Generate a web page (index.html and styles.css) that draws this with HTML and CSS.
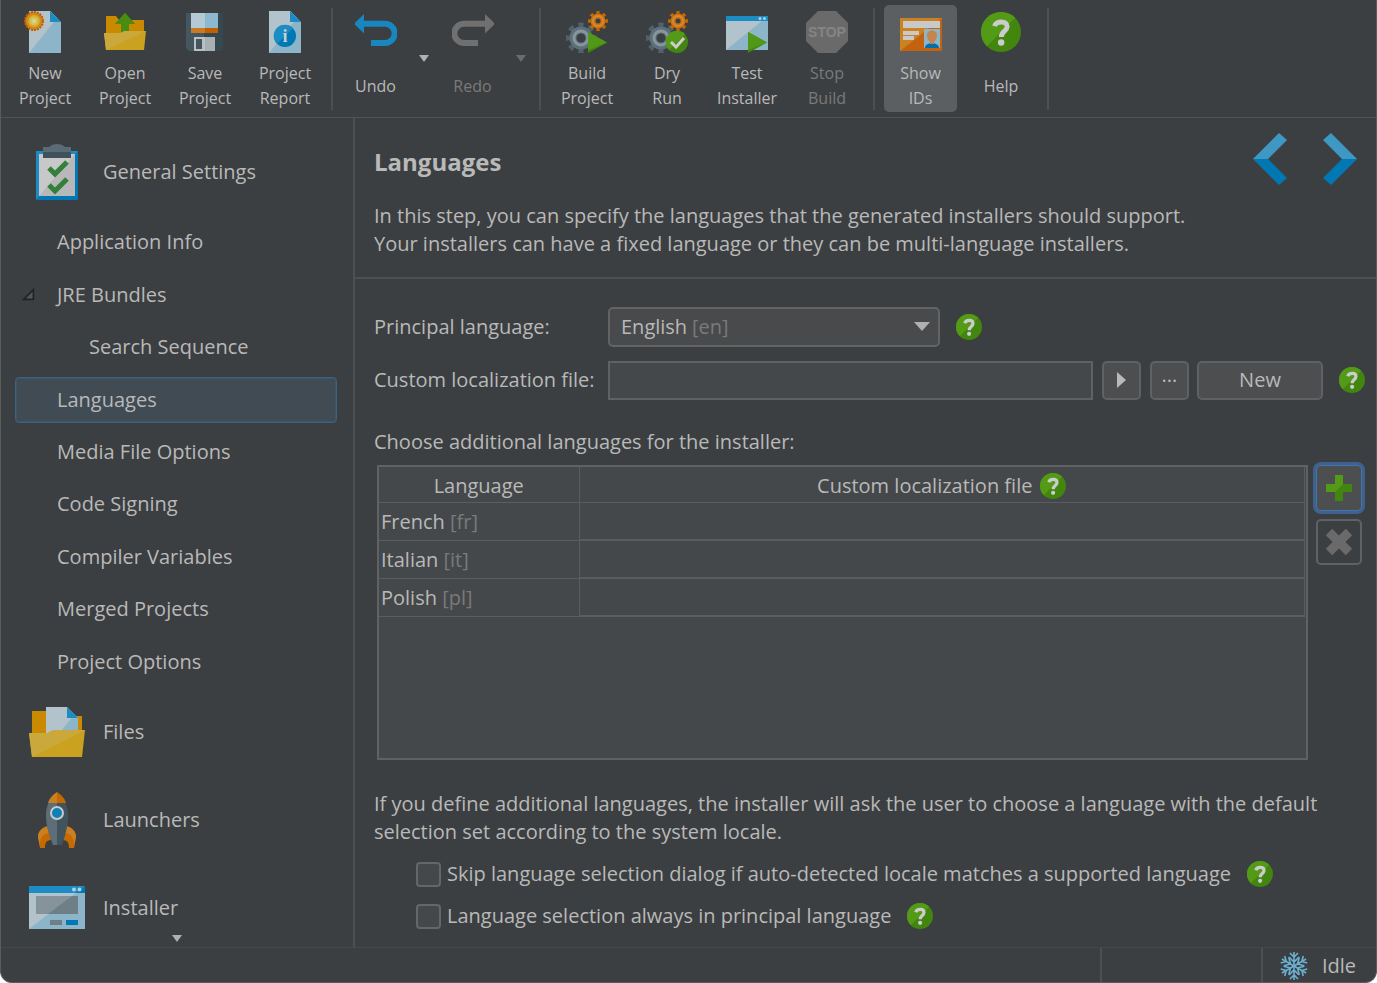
FILE: index.html
```html
<!DOCTYPE html>
<html lang="en">
<head>
  <meta charset="UTF-8">
  <meta name="viewport" content="width=device-width, initial-scale=1.0">
  <title>Languages</title>
  <link rel="stylesheet" href="styles.css">
</head>
<body>

  <!-- shared icons -->
  <svg class="defs" aria-hidden="true">
    <symbol id="i-help" viewBox="0 0 26 26">
      <circle cx="13" cy="13" r="13" fill="#42860f"/>
      <path d="M3.8 22.2A13 13 0 0 1 22.2 3.8z" fill="#539a17"/>
      <path d="M8.800 9.200C9.800 5.600 17 5.400 17 9.500C17 12.600 13.200 12.400 13.200 16.200" fill="none" stroke="#cccccc" stroke-width="3.200"/>
      <circle cx="13.100" cy="19.800" r="2.100" fill="#cccccc"/>
    </symbol>
    <symbol id="i-gears" viewBox="0 0 42 42">
      <circle cx="15" cy="27" r="13" fill="none" stroke="#4f616b" stroke-width="5" pathLength="16" stroke-dasharray="1 1" stroke-dashoffset="0.5"/>
      <circle cx="15" cy="27" r="8" fill="none" stroke="#5d6f79" stroke-width="7"/>
      <circle cx="15" cy="27" r="7" fill="none" stroke="#87959c" stroke-width="3"/>
      <circle cx="32" cy="10" r="8" fill="none" stroke="#c46700" stroke-width="4" pathLength="16" stroke-dasharray="1 1" stroke-dashoffset="0.5"/>
      <circle cx="32" cy="10" r="5" fill="none" stroke="#cc7009" stroke-width="5"/>
      <circle cx="32" cy="10" r="5" fill="none" stroke="#d28a3a" stroke-width="2"/>
    </symbol>
    <symbol id="i-play" viewBox="0 0 42 42">
      <path d="M22 21L41 31.500L22 42z" fill="#42860f"/>
      <path d="M22 21L41 31.500L22 39z" fill="#529818"/>
    </symbol>
    <symbol id="i-turn" viewBox="0 0 42 42">
      <path d="M8 12.700H30a9.600 9.600 0 0 1 0 19.300H16" fill="none" stroke="currentColor" stroke-width="6"/>
      <path d="M-1 12.700L9 3v19.500z" fill="currentColor"/>
    </symbol>
  </svg>

  <header class="toolbar">
    <div class="group">
      <button class="tool">
        <svg viewBox="0 0 42 42">
          <path d="M5 0H26L37 11V42H5z" fill="#8db5c9"/>
          <path d="M5 0H26L33 7L5 42z" fill="#b3c3cb"/>
          <path d="M26 0L37 11H26z" fill="#1c8cc4"/>
          <circle cx="10" cy="10" r="9" fill="#d08a1c" stroke="#c45a00" stroke-width="2" stroke-dasharray="2 1"/>
          <circle cx="10" cy="10" r="6" fill="#d3b02f"/>
          <circle cx="10" cy="10" r="4" fill="#d3c556"/>
          <circle cx="10" cy="10" r="2" fill="#d8d49a"/>
        </svg>
        <span>New<br>Project</span>
      </button>
      <button class="tool">
        <svg viewBox="0 0 42 42">
          <path d="M2 5H12L15 9H40V25H2z" fill="#c98a00"/>
          <path d="M21 2L31 13H25V24H17V13H11z" fill="#478d11"/>
          <path d="M0 22H16L20 20H42L40 39H2z" fill="#cba21f"/>
          <path d="M0 22H16L20 20H42L2 39z" fill="#cba83c"/>
          <path d="M21 2L31 13H25V20H20L17 21.500V13H11z" fill="#478d11"/>
        </svg>
        <span>Open<br>Project</span>
      </button>
      <button class="tool">
        <svg viewBox="0 0 42 42">
          <path d="M2 2H39V40H5L2 37z" fill="#35474f"/>
          <path d="M2 2H20V40H5L2 37z" fill="#445761"/>
          <rect x="7" y="2" width="27" height="15" fill="#8db9d0"/>
          <rect x="7" y="2" width="14" height="15" fill="#b3c9d3"/>
          <rect x="7" y="17" width="27" height="5" fill="#c45f00"/>
          <rect x="7" y="17" width="14" height="5" fill="#ca7a22"/>
          <rect x="10" y="26" width="21" height="14" fill="#a9b0b3"/>
          <rect x="10" y="26" width="11" height="14" fill="#bcc0c2"/>
          <rect x="12" y="28" width="6" height="10" fill="#44555e"/>
        </svg>
        <span>Save<br>Project</span>
      </button>
      <button class="tool">
        <svg viewBox="0 0 42 42">
          <path d="M5 0H26L37 11V42H5z" fill="#8db5c9"/>
          <path d="M5 0H26L33 7L5 42z" fill="#b3c3cb"/>
          <path d="M26 0L37 11H26z" fill="#1c8cc4"/>
          <circle cx="21" cy="25" r="11" fill="#0078b4"/>
          <path d="M13 33A11 11 0 0 1 29 17z" fill="#1c8cc4"/>
          <text class="serif" x="21" y="31" text-anchor="middle" font-size="18" font-weight="700" fill="#c8d0d4">i</text>
        </svg>
        <span>Project<br>Report</span>
      </button>
    </div>

    <div class="group">
      <button class="tool narrow undo">
        <svg><use href="#i-turn"/></svg>
        <span>Undo</span>
      </button>
      <button class="more" aria-label="Undo history"><i class="caret"></i></button>
      <button class="tool narrow redo" disabled>
        <svg><use href="#i-turn"/></svg>
        <span>Redo</span>
      </button>
      <button class="more" aria-label="Redo history" disabled><i class="caret"></i></button>
    </div>

    <div class="group">
      <button class="tool">
        <svg><use href="#i-gears"/><use href="#i-play"/></svg>
        <span>Build<br>Project</span>
      </button>
      <button class="tool">
        <svg viewBox="0 0 42 42">
          <use href="#i-gears"/>
          <circle cx="31" cy="31" r="11" fill="#42860f"/>
          <path d="M23 39A11 11 0 0 1 39 23z" fill="#539a17"/>
          <path d="M25 31L30 36L38 27" fill="none" stroke="#cccccc" stroke-width="3"/>
        </svg>
        <span>Dry<br>Run</span>
      </button>
      <button class="tool">
        <svg viewBox="0 0 42 42">
          <rect y="5" width="42" height="34" fill="#8db5c9"/>
          <path d="M0 5H42L0 39z" fill="#b3c3cb"/>
          <rect y="5" width="42" height="5" fill="#1c8cc4"/>
          <circle cx="34" cy="7.500" r="1.500" fill="#b3cfdc"/>
          <circle cx="38.500" cy="7.500" r="1.500" fill="#b3cfdc"/>
          <use href="#i-play"/>
        </svg>
        <span>Test<br>Installer</span>
      </button>
      <button class="tool" disabled>
        <svg viewBox="0 0 42 42">
          <path d="M12 0H30L42 12V30L30 42H12L0 30V12z" fill="#6a6a6a"/>
          <text class="sans" x="21" y="26" text-anchor="middle" font-size="14" font-weight="700" fill="#858585">STOP</text>
        </svg>
        <span>Stop<br>Build</span>
      </button>
    </div>

    <div class="group">
      <button class="tool narrow active" aria-pressed="true">
        <svg viewBox="0 0 42 42">
          <rect y="7" width="42" height="33" fill="#c46210"/>
          <path d="M0 7H42L0 40z" fill="#cb8220"/>
          <rect x="3" y="10" width="37" height="7" fill="#c9c9c9"/>
          <rect x="3" y="20" width="16" height="4" fill="#c9c9c9"/>
          <rect x="3" y="25" width="11" height="4" fill="#c9c9c9"/>
          <rect x="24" y="18" width="16" height="19" fill="#8db5c9"/>
          <path d="M25 37C25 33 29 33 30 32H34C35 33 39 33 39 37z" fill="#0070aa"/>
          <path d="M27 24C27 18 37 18 37 24C37 28 35 30 34 31V33H30V31C29 30 27 28 27 24z" fill="#c48450"/>
        </svg>
        <span>Show<br>IDs</span>
      </button>
      <button class="tool help-tool">
        <svg viewBox="0 0 42 42"><use href="#i-help" x="1" y="1" width="40" height="40"/></svg>
        <span>Help</span>
      </button>
    </div>
  </header>

  <main>
    <nav class="sidebar">
      <a class="category" href="#">
        <svg viewBox="0 0 56 56">
          <rect x="7" y="7" width="42" height="49" rx="1" fill="#0078b4"/>
          <path d="M7 7H49L7 56z" fill="#1c8cc4"/>
          <rect x="10" y="10" width="36" height="42" fill="#b8b8ba"/>
          <path d="M10 10H46L10 52z" fill="#c8c8c8"/>
          <path d="M14 3H20C24 -1 32 -1 36 3H42V14H14z" fill="#5a6b75"/>
          <rect x="14" y="8" width="28" height="6" fill="#3f525c"/>
          <path d="M20 24L26 30L38 18M20 41L26 47L38 35" fill="none" stroke="#32803a" stroke-width="5"/>
        </svg>
        General Settings
      </a>
      <ul>
        <li><a href="#">Application Info</a></li>
        <li>
          <a href="#">
            <svg class="expander" viewBox="0 0 12 12"><path d="M1.500 10.500H10.500V1.500z" fill="#555555" stroke="#222222" stroke-width="1.500"/></svg>
            JRE Bundles
          </a>
        </li>
        <li><a class="nested" href="#">Search Sequence</a></li>
        <li><a class="selected" href="#">Languages</a></li>
        <li><a href="#">Media File Options</a></li>
        <li><a href="#">Code Signing</a></li>
        <li><a href="#">Compiler Variables</a></li>
        <li><a href="#">Merged Projects</a></li>
        <li><a href="#">Project Options</a></li>
      </ul>
      <a class="category" href="#">
        <svg viewBox="0 0 56 56">
          <path d="M3 7H18V12H53V30H3z" fill="#c98a00"/>
          <path d="M17 3H38L49 14V32H17z" fill="#8db5c9"/>
          <path d="M17 3H38L44 12L28 32H17z" fill="#b3c3cb"/>
          <path d="M38 3L49 14H38z" fill="#1c8cc4"/>
          <path d="M0 29H19L24 26H56L53 53H3z" fill="#cba21f"/>
          <path d="M0 29H19L24 26H56L3 53z" fill="#cba83c"/>
        </svg>
        Files
      </a>
      <a class="category" href="#">
        <svg viewBox="0 0 56 56">
          <path d="M19 34C12 36 9 40 9 45L11 56H16C16 50 18 48 23 48z" fill="#c46a00"/>
          <path d="M37 34C44 36 47 40 47 45L45 56H40C40 50 38 48 33 48z" fill="#c46a00"/>
          <path d="M19 34C12 36 9 40 9 45L11 54C11 46 13 42 20 41zM37 34C44 36 47 40 47 45L45 54C45 46 43 42 36 41z" fill="#ca7f20"/>
          <path d="M20 10H36C40 18 41 30 33 53H24C15 30 16 18 20 10z" fill="#41545e"/>
          <path d="M20 10H28V53H24C15 30 16 18 20 10z" fill="#5d6e78"/>
          <path d="M28 0C33 3 36 7 37 11H28z" fill="#c46a00"/>
          <path d="M28 0C23 3 20 7 19 11H28z" fill="#ca7f20"/>
          <circle cx="28" cy="21" r="6" fill="#0f7fb9" stroke="#c8c8c8" stroke-width="2"/>
        </svg>
        Launchers
      </a>
      <a class="category" href="#">
        <svg viewBox="0 0 56 56">
          <rect y="6" width="56" height="43" fill="#8db5c9"/>
          <path d="M0 6H56L0 49z" fill="#b3c3cb"/>
          <rect y="6" width="56" height="7" fill="#1c8cc4"/>
          <path d="M56 6V13H47z" fill="#0078b4"/>
          <circle cx="45" cy="9.500" r="2" fill="#b3cfdc"/>
          <circle cx="50.500" cy="9.500" r="2" fill="#b3cfdc"/>
          <rect x="7" y="16" width="42" height="18" fill="#6f7f87"/>
          <path d="M7 16H43L19 34H7z" fill="#87939a"/>
          <rect x="21" y="40" width="12" height="5" fill="#6f7f87"/>
          <rect x="37" y="40" width="12" height="5" fill="#0078b4"/>
        </svg>
        Installer
      </a>
      <button class="scroll-down" aria-label="Scroll down"><i class="caret"></i></button>
    </nav>

    <section class="content">
      <div class="step-header">
        <div>
          <h1>Languages</h1>
          <p>In this step, you can specify the languages that the generated installers should support.<br>
            Your installers can have a fixed language or they can be multi-language installers.</p>
        </div>
        <div class="step-nav">
          <button aria-label="Previous step">
            <svg viewBox="0 0 34 54">
              <path d="M0 27L26 1L34 8L15 27z" fill="#3f98c4"/>
              <path d="M0 27L26 53L34 46L15 27z" fill="#0078b4"/>
            </svg>
          </button>
          <button aria-label="Next step">
            <svg viewBox="0 0 34 54">
              <path d="M34 27L8 1L0 8L19 27z" fill="#3f98c4"/>
              <path d="M34 27L8 53L0 46L19 27z" fill="#0078b4"/>
            </svg>
          </button>
        </div>
      </div>

      <form class="step-body">
        <div class="row">
          <label for="principal">Principal language:</label>
          <div class="combo">
            <select id="principal">
              <option>English</option>
            </select>
            <span class="code">[en]</span>
            <i class="caret"></i>
          </div>
          <button type="button" class="help" aria-label="Help"><svg><use href="#i-help"/></svg></button>
        </div>

        <div class="row">
          <label for="custom-file">Custom localization file:</label>
          <input type="text" id="custom-file">
          <button type="button" class="btn small" aria-label="Insert variable"><i class="caret right"></i></button>
          <button type="button" class="btn small dots">...</button>
          <button type="button" class="btn wide">New</button>
          <button type="button" class="help" aria-label="Help"><svg><use href="#i-help"/></svg></button>
        </div>

        <p class="caption">Choose additional languages for the installer:</p>

        <div class="table-area">
          <div class="table-box">
            <table>
              <thead>
                <tr>
                  <th class="lang">Language</th>
                  <th>
                    <div class="th-help">Custom localization file
                      <button type="button" class="help" aria-label="Help"><svg><use href="#i-help"/></svg></button>
                    </div>
                  </th>
                </tr>
              </thead>
              <tbody>
                <tr><td>French <span class="code">[fr]</span></td><td></td></tr>
                <tr><td>Italian <span class="code">[it]</span></td><td></td></tr>
                <tr><td>Polish <span class="code">[pl]</span></td><td></td></tr>
              </tbody>
            </table>
          </div>
          <div class="table-buttons">
            <button type="button" class="btn focused" aria-label="Add language">
              <svg viewBox="0 0 26 26">
                <path d="M9 0H17V9H26V17H17V26H9V17H0V9H9z" fill="#42860f"/>
                <path d="M9 0H17V9L9 17H0V9H9z" fill="#539a17"/>
              </svg>
            </button>
            <button type="button" class="btn remove" aria-label="Remove language" disabled>
              <svg viewBox="0 0 28 28"><path d="M4 4L24 24M24 4L4 24" stroke="#6a6a6a" stroke-width="9"/></svg>
            </button>
          </div>
        </div>

        <p class="note">If you define additional languages, the installer will ask the user to choose a language with the default<br>
          selection set according to the system locale.</p>

        <div class="check">
          <input type="checkbox" id="skip">
          <label for="skip">Skip language selection dialog if auto-detected locale matches a supported language</label>
          <button type="button" class="help" aria-label="Help"><svg><use href="#i-help"/></svg></button>
        </div>
        <div class="check">
          <input type="checkbox" id="always">
          <label for="always">Language selection always in principal language</label>
          <button type="button" class="help" aria-label="Help"><svg><use href="#i-help"/></svg></button>
        </div>
      </form>
    </section>
  </main>

  <footer>
    <div class="cell"></div>
    <div class="cell idle">
      <svg viewBox="0 0 28 28">
        <defs>
          <path id="arm" d="M14 14V0M10 1L14 5L18 1M9 5L14 10L19 5"/>
        </defs>
        <g fill="none" stroke="#6aaed0" stroke-width="1.600">
          <use href="#arm"/>
          <use href="#arm" transform="rotate(60 14 14)"/>
          <use href="#arm" transform="rotate(120 14 14)"/>
          <use href="#arm" transform="rotate(180 14 14)"/>
          <use href="#arm" transform="rotate(240 14 14)"/>
          <use href="#arm" transform="rotate(300 14 14)"/>
        </g>
      </svg>
      Idle
    </div>
  </footer>

</body>
</html>
```
FILE: styles.css
```css
* {
  margin: 0;
  padding: 0;
  box-sizing: border-box;
}

html {
  background: #ffffff;
}

body {
  display: flex;
  flex-direction: column;
  height: 100vh;
  overflow: hidden;
  background: #3c3f41;
  border: 1px solid #5a5b5d;
  border-top: none;
  border-radius: 0 0 12px 12px;
  color: #b9b9b9;
  font-family: "Open Sans", "Noto Sans", sans-serif;
  font-size: 20px;
  line-height: 28px;
}

button,
input,
select {
  font: inherit;
  color: inherit;
}

button {
  background: none;
  border: none;
}

a {
  color: inherit;
  text-decoration: none;
}

svg {
  display: block;
  overflow: visible;
}

.defs {
  position: absolute;
  width: 0;
  height: 0;
}

.serif {
  font-family: "Liberation Serif", serif;
}

.sans {
  font-family: "Liberation Sans", sans-serif;
}

.code {
  color: #7a7a7a;
}

.caret {
  display: block;
  width: 0;
  border: 5px solid transparent;
  border-top: 7px solid #b0b0b0;
  border-bottom: none;
}

.caret.right {
  border: 8px solid transparent;
  border-left: 9px solid #b9b9b9;
  border-right: none;
}

/* toolbar */
.toolbar {
  display: flex;
  height: 118px;
  padding-top: 5px;
  border-bottom: 1px solid #505254;
}

.group {
  display: flex;
  position: relative;
  padding: 0 8px 0 6px;
}

.group::after {
  content: "";
  position: absolute;
  top: 3px;
  right: 0;
  width: 2px;
  height: 102px;
  background: #4d4f51;
}

.group:first-child {
  padding-left: 4px;
}

.group:last-child {
  gap: 4px;
  padding-left: 9px;
}

.tool {
  display: flex;
  flex-direction: column;
  align-items: center;
  gap: 8px;
  width: 80px;
  height: 107px;
  padding-top: 6px;
  border-radius: 5px;
  font-size: 16px;
  line-height: 25px;
}

.tool svg {
  width: 42px;
  height: 42px;
}

.tool span {
  display: flex;
  align-items: center;
  height: 50px;
}

.tool:disabled {
  color: #7a7a7a;
}

.narrow {
  width: 73px;
}

.active {
  background: #5c5f61;
}

.undo svg {
  color: #1886c0;
}

.redo svg {
  color: #707070;
  transform: scaleX(-1);
}

.more {
  width: 24px;
  height: 107px;
}

.more .caret {
  margin: 0 auto;
}

.more:disabled .caret {
  opacity: 0.4;
}

main {
  display: flex;
  flex: 1;
  min-height: 0;
}

/* sidebar */
.sidebar {
  position: relative;
  width: 354px;
  padding-top: 10px;
  overflow: hidden;
  border-right: 2px solid #4d4f51;
}

.category {
  display: flex;
  align-items: center;
  gap: 18px;
  height: 88px;
  padding-left: 28px;
}

.category svg {
  width: 56px;
  height: 56px;
}

.sidebar ul {
  display: grid;
  grid-auto-rows: 1fr;
  height: 472px;
  list-style: none;
}

.sidebar li {
  display: flex;
  align-items: center;
  padding: 0 16px 0 14px;
}

.sidebar li a {
  position: relative;
  flex: 1;
  padding: 8px 0 8px 41px;
  border: 1px solid transparent;
  border-radius: 4px;
}

.sidebar li .nested {
  padding-left: 73px;
}

.sidebar li .selected {
  background: #404b54;
  border-color: #3c6182;
  box-shadow: inset 0 0 0 1px #3d5568;
}

.expander {
  position: absolute;
  left: 6px;
  top: 15px;
  width: 13px;
  height: 13px;
}

.scroll-down {
  position: absolute;
  left: 0;
  right: 0;
  bottom: 5px;
}

.scroll-down .caret {
  margin: 0 auto;
}

/* step */
.content {
  display: flex;
  flex-direction: column;
  flex: 1;
  min-width: 0;
}

.step-header {
  display: flex;
  justify-content: space-between;
  height: 161px;
  padding: 14px 19px 0;
  border-bottom: 2px solid #4d4f51;
}

h1 {
  margin-bottom: 24px;
  font-size: 24px;
  line-height: 32px;
  padding-top: 14px;
}

.step-nav {
  display: flex;
  gap: 36px;
}

.step-nav svg {
  width: 34px;
  height: 54px;
}

.step-nav button {
  height: 54px;
}

.step-body {
  display: flex;
  flex-direction: column;
  flex: 1;
  min-height: 0;
  padding: 28px 11px 10px 19px;
}

.row {
  display: flex;
  align-items: center;
  height: 40px;
  margin-bottom: 13px;
}

.row label {
  width: 234px;
}

.row input {
  flex: 1;
  min-width: 0;
  height: 39px;
  padding: 0 10px;
  background: #45484a;
  border: 2px solid #5f6163;
  outline: none;
}

.combo {
  position: relative;
  width: 332px;
}

.combo select {
  display: block;
  width: 100%;
  height: 40px;
  padding: 0 11px;
  appearance: none;
  background: #484a4c;
  border: 2px solid #616365;
  border-radius: 5px;
}

.combo .code {
  position: absolute;
  left: 84px;
  top: 6px;
  pointer-events: none;
}

.combo .caret {
  position: absolute;
  right: 10px;
  top: 15px;
  border-width: 9px 8px 0;
  pointer-events: none;
}

.help svg {
  width: 26px;
  height: 26px;
}

.row .help,
.check .help {
  margin-left: 16px;
}

.btn {
  display: flex;
  align-items: center;
  justify-content: center;
  height: 39px;
  background: #4c4e50;
  border: 2px solid #5f6163;
  border-radius: 5px;
}

.btn.small {
  width: 39px;
  margin-left: 9px;
}

.btn.wide {
  width: 126px;
  margin-left: 8px;
}

.btn.dots {
  padding-bottom: 10px;
}

.caption {
  margin: 15px 0 9px;
}

.table-area {
  display: flex;
  flex: 1;
  gap: 8px;
  min-height: 0;
  padding-left: 3px;
}

.table-box {
  flex: 1;
  background: #45484a;
  border: 2px solid #5f6163;
  padding-right: 1px;
}

table {
  width: 100%;
  border-collapse: collapse;
}

th {
  height: 35px;
  padding-top: 3px;
  font-weight: normal;
  border-right: 1px solid #5a5d5f;
  border-bottom: 1px solid #5a5d5f;
}

.lang {
  width: 200px;
}

.th-help {
  display: flex;
  align-items: center;
  justify-content: center;
  gap: 8px;
}

.th-help .help {
  height: 26px;
}

td {
  height: 38px;
  padding: 2px 2px 0;
  border-bottom: 1px solid #5a5d5f;
}

td + td {
  border: 1px solid #5a5d5f;
  border-bottom-width: 2px;
}

.table-buttons {
  display: flex;
  flex-direction: column;
  gap: 8px;
  padding-right: 3px;
}

.table-buttons .btn {
  width: 46px;
  height: 46px;
}

.table-buttons .focused {
  border: 1px solid #4572a8;
  box-shadow: 0 0 0 3px #3d6290;
}

.focused svg {
  width: 26px;
  height: 26px;
}

.remove {
  background: none;
}

.remove svg {
  width: 28px;
  height: 28px;
}

.note {
  margin: 30px 0 7px;
}

.check {
  display: flex;
  align-items: center;
  height: 42px;
  padding-left: 42px;
}

.check input {
  width: 25px;
  height: 25px;
  margin-right: 6px;
  appearance: none;
  background: #45484a;
  border: 2px solid #666666;
  border-radius: 4px;
}

.check .help {
  height: 26px;
}

/* status bar */
footer {
  display: flex;
  justify-content: flex-end;
  height: 35px;
  border-top: 1px solid #454749;
}

.cell {
  width: 161px;
  border-left: 2px solid #4d4f51;
}

.idle {
  display: flex;
  align-items: center;
  gap: 14px;
  width: 115px;
  padding: 2px 0 0 17px;
}

.idle svg {
  width: 28px;
  height: 28px;
}
```
